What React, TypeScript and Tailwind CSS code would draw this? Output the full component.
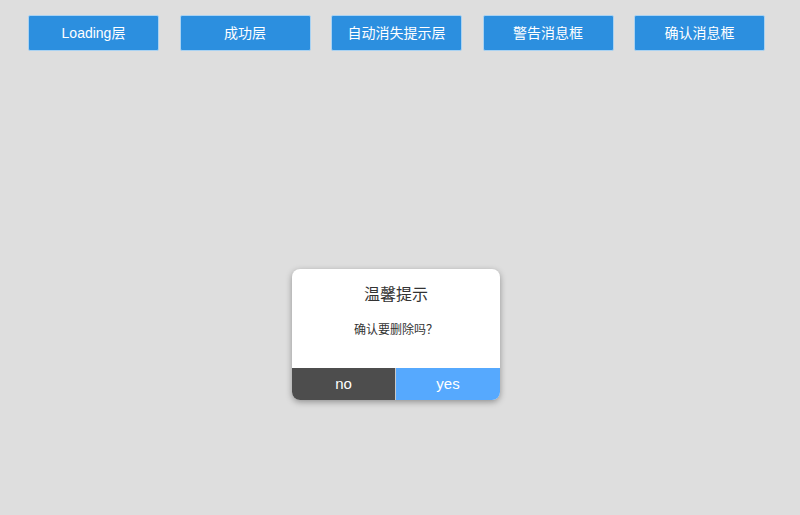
import React from "react";

const labels = ["Loading层", "成功层", "自动消失提示层", "警告消息框", "确认消息框"];

export default function App() {
  return (
    <div
      className="relative w-[800px] h-[515px] bg-[#dedede] overflow-hidden"
      style={{ fontFamily: '"Liberation Sans", "Noto Sans CJK SC", sans-serif' }}
    >
      <div className="flex gap-[20.5px] pl-[28px] pt-[15px]">
        {labels.map((l) => (
          <button
            key={l}
            className="w-[131px] h-[36px] bg-[#2c8fdf] border border-[#a9d2f2] rounded-[2px] text-white text-[14px] leading-none"
          >
            {l}
          </button>
        ))}
      </div>

      <div className="absolute left-[292px] top-[269px] w-[208px] h-[131px] bg-white rounded-[8px] overflow-hidden shadow-[0_2px_6px_rgba(0,0,0,0.35)] flex flex-col">
        <div className="flex-1 flex flex-col items-center">
          <div className="mt-[15px] text-[16px] text-[#333] leading-[22px]">温馨提示</div>
          <div className="mt-[16px] text-[12px] text-[#333] leading-[16px]">确认要删除吗？</div>
        </div>
        <div className="flex h-[32px]">
          <div className="w-[103px] bg-[#4d4d4d] text-white text-[15px] flex items-center justify-center">
            no
          </div>
          <div className="w-[1px] bg-[#c8c8c8]" />
          <div className="flex-1 bg-[#56a9fe] text-white text-[15px] flex items-center justify-center">
            yes
          </div>
        </div>
      </div>
    </div>
  );
}
